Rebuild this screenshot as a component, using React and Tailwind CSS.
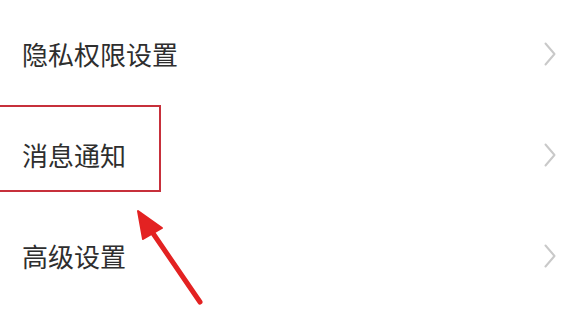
import React from "react";

const ROWS = ["隐私权限设置", "消息通知", "高级设置"];

function Chevron() {
  return (
    <svg width="12" height="24" viewBox="0 0 12 24" fill="none">
      <path d="M1.5 1.5 L10.5 12 L1.5 22.5" stroke="#c9c9c9" strokeWidth="2" strokeLinecap="round" strokeLinejoin="round" />
    </svg>
  );
}

export default function App() {
  return (
    <div
      className="relative w-[584px] h-[332px] overflow-hidden bg-white"
      style={{ fontFamily: '"Noto Sans CJK SC", "Noto Sans", sans-serif' }}
    >
      <div className="pt-[3px]">
        {ROWS.map((label) => (
          <div key={label} className="h-[101px] flex items-center justify-between pl-[22px] pr-[28px]">
            <span className="text-[26px] leading-none text-[#2e2e2e]">{label}</span>
            <Chevron />
          </div>
        ))}
      </div>

      {/* annotation box */}
      <div className="absolute left-[-2px] top-[105px] w-[163px] h-[87px] border-2 border-[#c7303b]" />

      {/* annotation arrow */}
      <svg className="absolute left-0 top-0" width="584" height="332" viewBox="0 0 584 332">
        <line x1="200" y1="302" x2="148" y2="226" stroke="#e32222" strokeWidth="5" strokeLinecap="round" />
        <polygon points="138,211 162,228 143,239" fill="#e32222" stroke="#e32222" strokeWidth="2" strokeLinejoin="round" />
      </svg>
    </div>
  );
}
